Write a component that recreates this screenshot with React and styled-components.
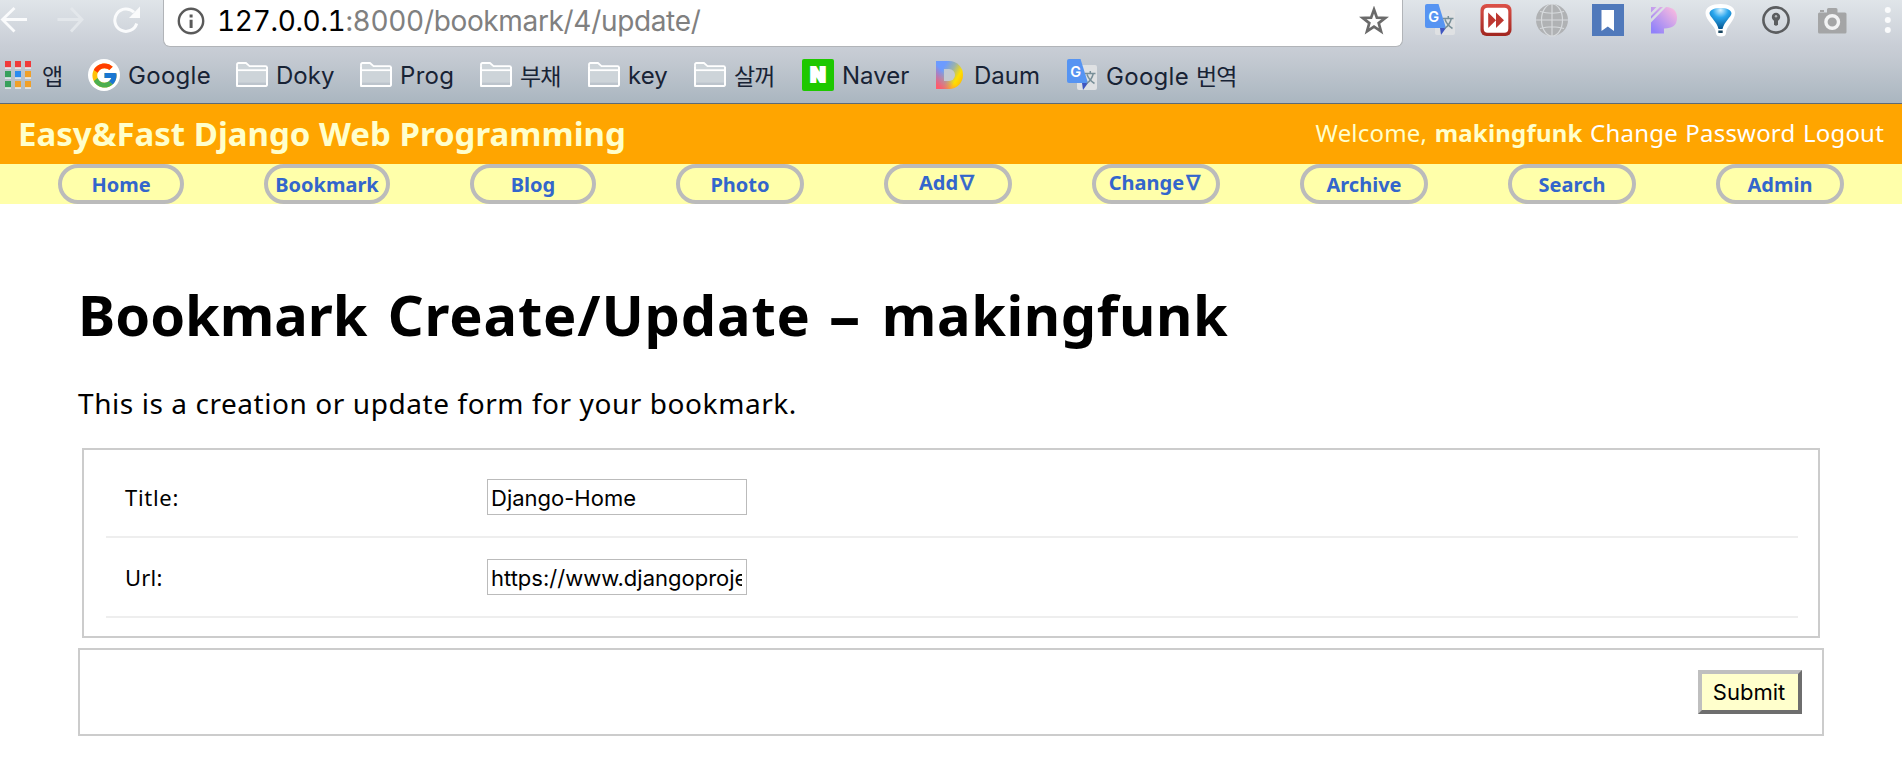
import React from "react";
import styled, { createGlobalStyle } from "styled-components";
import { FcGoogle } from "react-icons/fc";

const GlobalStyle = createGlobalStyle`
  * { box-sizing: border-box; }
  body { margin: 0; background: #fff; overflow: hidden; }
  svg { display: block; flex: none; }
`;

const uiFont = `Inter, "Noto Sans CJK KR", sans-serif`;
const pageFont = `"Lucida Grande", "Noto Sans", "DejaVu Sans", sans-serif`;

/* Browser chrome */

const Chrome = styled.div`
  height: 104px;
  overflow: hidden;
  background: linear-gradient(#e0e5e9 0, #c9ced6 46px, #c3c9d1 60px, #aab6c0 103px);
  border-bottom: 1px solid #5d6a76;
  font-family: ${uiFont};
`;
const Toolbar = styled.div`
  display: flex;
  align-items: flex-start;
  height: 47px;
`;
const NavControls = styled.div`
  display: flex;
  flex: none;
  width: 163px;
  padding-top: 6px;
  gap: 28px;
`;
const AddressBar = styled.div`
  display: flex;
  flex: none;
  align-items: center;
  width: 1240px;
  height: 47px;
  padding: 0 13px 5px;
  background: #fff;
  border: solid #b1b4b8;
  border-width: 0 1px 1px;
  border-radius: 0 0 7px 7px;
`;
const Url = styled.div`
  flex: 1;
  margin-left: 12px;
  font-size: 28px;
  line-height: 42px;
  letter-spacing: -0.34px;
  font-feature-settings: "tnum";
  color: #808080;
`;
const Host = styled.span`
  color: #000;
`;
const Extensions = styled.div`
  display: flex;
  flex: none;
  gap: 24px;
  padding: 4px 0 0 21px;
`;
const BookmarkBar = styled.div`
  display: flex;
  padding: 12px 0 0 5px;
`;
const BookmarkLink = styled.div`
  display: flex;
  align-items: center;
  flex: none;
  width: ${(p) => p.$width}px;
  height: 32px;
  font-size: 24px;
  letter-spacing: ${(p) => p.$spacing || 0}px;
  white-space: nowrap;
  color: #182335;
`;
const BookmarkIcon = styled.span`
  display: flex;
  flex: none;
  width: ${(p) => p.$width || 40}px;
`;
const Korean = styled.span`
  font-family: "Noto Sans CJK KR", sans-serif;
  font-size: 23px;
  font-weight: 400;
  letter-spacing: -0.9px;
`;
const GoogleBadge = styled.span`
  display: flex;
  align-items: center;
  justify-content: center;
  width: 32px;
  height: 32px;
  border-radius: 50%;
  background: #fff;
`;
const NaverBadge = styled.span`
  display: flex;
  align-items: center;
  justify-content: center;
  width: 32px;
  height: 32px;
  border-radius: 2px;
  background: #1ec800;
  color: #fff;
  font: 900 20px/32px Inter, sans-serif;
  -webkit-text-stroke: 2px #fff;
`;
const DaumBadge = styled.span`
  display: flex;
  align-items: center;
  justify-content: center;
  width: 27px;
  height: 28px;
  margin-left: 1px;
  border-radius: 0 14px 14px 0;
  background: linear-gradient(to top right, #ff5b6c 8%, #ff9a1a00 45%),
    linear-gradient(120deg, #6c9bff 25%, #9db3a6 50%, #ffe000 72%, #ffa510);
  &::after {
    content: "";
    width: 11px;
    height: 12px;
    border-radius: 0 6px 6px 0;
    background: #c3cad1;
  }
`;

const BackIcon = () => (
  <svg width="28" height="28" viewBox="0 0 28 28" fill="none" stroke="#fafbfc" strokeWidth="2.8">
    <path d="M14.5 2 2.5 13.5 14.5 25.5M2.5 13.5H27" />
  </svg>
);
const ForwardIcon = () => (
  <svg width="28" height="28" viewBox="0 0 28 28" fill="none" stroke="#e3e7eb" strokeWidth="2.8">
    <path d="M15 2 26 13.5 15 25.5M26 13.5H1.5" />
  </svg>
);
const ReloadIcon = () => (
  <svg width="30" height="28" viewBox="0 0 30 28">
    <path d="M24.7 17.5A11.2 11.2 0 1 1 22 6.3" fill="none" stroke="#fafbfc" strokeWidth="3" />
    <path d="M28 .5V12H17z" fill="#fafbfc" />
  </svg>
);
const InfoIcon = () => (
  <svg width="28" height="28" viewBox="0 0 28 28">
    <circle cx="14" cy="14" r="12.2" fill="none" stroke="#5a5a5a" strokeWidth="2.4" />
    <path d="M12.6 7.6h3v3h-3zM12.6 12.8h3V21h-3z" fill="#5a5a5a" />
  </svg>
);
const StarIcon = () => (
  <svg width="30" height="30" viewBox="0 0 30 30">
    <path
      d="M15 3.5 17.9 11.6 26.3 11.9 19.7 17.1 22 25.4 15 20.6 8 25.4 10.3 17.1 3.7 11.9 12.1 11.6z"
      fill="none" stroke="#6a6a6a" strokeWidth="2.7"
    />
  </svg>
);
const FolderIcon = () => (
  <svg width="32" height="32" viewBox="0 0 32 32" stroke="#fff" strokeWidth="1.8" strokeLinejoin="round">
    <path d="M1 27V5.5Q1 4 2.5 4H10L13.5 7.2H29.5Q31 7.2 31 8.7V25.5Q31 27 29.5 27H2.5Q1 27 1 25.5z" fill="#cdd4d9" />
    <path d="M1 11.2H31" />
    <path d="M2 24.8H30" stroke="#bcc4cc" strokeWidth="2.4" />
    <path d="M1 8V25.5Q1 27 2.5 27H29.5Q31 27 31 25.5V8" fill="none" />
  </svg>
);
const AppsIcon = () => (
  <svg width="26" height="28" viewBox="0 0 26 28">
    {["#f03a3a", "#f03a3a", "#f03a3a", "#37a05c", "#2a8cf0", "#f0a028", "#37a05c", "#f0a028", "#f0a028"].map((c, i) => (
      <g key={i}>
        <rect x={(i % 3) * 10} y={1 + Math.floor(i / 3) * 10} width="6" height="6.8" fill="#e8ecef" />
        <rect x={(i % 3) * 10} y={Math.floor(i / 3) * 10} width="6" height="6.2" fill={c} />
      </g>
    ))}
  </svg>
);
const TranslateIcon = () => (
  <svg width="32" height="32" viewBox="0 0 32 32">
    <rect x="11" y="6" width="20" height="25" rx="2" fill="#dfe1e3" />
    <path d="M16 24h6l-5 7z" fill="#3f56c0" />
    <path d="M1 2Q1 0 3 0H14.5L22 24H3Q1 24 1 22z" fill="#5694f2" />
    <text x="4.2" y="18" fontFamily="Inter" fontSize="14.5" fontWeight="600" fill="#fff">G</text>
    <path d="M19 14.5h10.5M24.3 12v2.5M27.3 14.5Q25.8 21 20.6 24.5M21 15.5Q23 21 28.5 24.5" fill="none" stroke="#788f98" strokeWidth="1.5" />
  </svg>
);
const FastForwardIcon = () => (
  <svg width="32" height="33" viewBox="0 0 32 33">
    <defs>
      <linearGradient id="redFrame" x2="0" y2="1">
        <stop stopColor="#dc5148" />
        <stop offset="1" stopColor="#a12620" />
      </linearGradient>
    </defs>
    <rect x=".5" width="31" height="32" rx="6" fill="url(#redFrame)" />
    <rect x="3.7" y="3.7" width="24.6" height="25" rx="4" fill="#fff" />
    <path d="M8.2 8.5 16 16.2 8.2 24zM16 8.5 24 16.2 16 24z" fill="#bd3730" />
  </svg>
);
const GlobeIcon = () => (
  <svg width="32" height="33" viewBox="0 0 32 33">
    <ellipse cx="16" cy="16" rx="16" ry="16" fill="#b0b2b4" />
    <g fill="none" stroke="#d7dadd" strokeWidth="1.2">
      <path d="M0 16H32M16 0V32M4 7.5Q16 11 28 7.5M4 24.5Q16 21 28 24.5" />
      <ellipse cx="16" cy="16" rx="10.5" ry="16" />
    </g>
  </svg>
);
const SaveIcon = () => (
  <svg width="32" height="32" viewBox="0 0 32 32">
    <path d="M0 0H32V32H0z" fill="#5079bb" />
    <path d="M9.5 6H22V27L15.8 22.5 9.5 27z" fill="#fff" />
  </svg>
);
const PetalIcon = () => (
  <svg width="32" height="32" viewBox="0 0 32 32">
    <defs>
      <linearGradient id="petal" x1="1" y1="0" x2="0" y2="1">
        <stop offset=".1" stopColor="#f6b9e0" />
        <stop offset=".9" stopColor="#9182fa" />
      </linearGradient>
    </defs>
    <path d="M3 29.5V18.5L18 3Q29 3.5 29 14 29 24.5 16 24.5V29.5zM3 14.8V12L12 3H15zM3 8.5V3H8.5z" fill="url(#petal)" />
  </svg>
);
const BalloonIcon = () => (
  <svg width="32" height="34" viewBox="0 0 32 34">
    <defs>
      <radialGradient id="balloon" cx=".5" cy=".1" r=".9">
        <stop stopColor="#d5f1ff" />
        <stop offset=".4" stopColor="#29a6ee" />
        <stop offset="1" stopColor="#06558f" />
      </radialGradient>
    </defs>
    <path d="M16.5 0C25 0 31 3 31 9 31 17 22 22 22 29Q22 32.5 17 32.5 12 32.5 12 29C12 22 1.5 17 1.5 9 1.5 3 8 0 16.5 0z" fill="#fff" />
    <path d="M16.5 4C23 4 27.5 6 27.5 9.5 27 13 20 18 18.5 25H14.5C13 18 6 13 5.5 9.5 5.5 6 10 4 16.5 4z" fill="url(#balloon)" />
    <path d="M14.3 26.5h4.4v2.5h-4.4z" fill="#17445f" />
  </svg>
);
const KeyholeIcon = () => (
  <svg width="32" height="32" viewBox="0 0 32 32">
    <circle cx="16" cy="16" r="12.6" fill="none" stroke="#5b5d5f" strokeWidth="2.6" />
    <circle cx="16" cy="13" r="4.2" fill="#5b5d5f" />
    <path d="M14 15h4v5.5q-2 2.5-4 0z" fill="#5b5d5f" />
    <circle cx="16" cy="12.2" r="1.2" fill="#b3b6b9" />
  </svg>
);
const CameraIcon = () => (
  <svg width="32" height="32" viewBox="0 0 32 32" fill="#a4a5a6">
    <path d="M2 10Q2 8.5 3.5 8.5H11V5.5Q11 4 12.5 4H20Q21.5 4 21.5 5.5V8.5H29Q30.5 8.5 30.5 10V28Q30.5 29.5 29 29.5H3.5Q2 29.5 2 28zM4 6h4v2H4z" />
    <circle cx="16.2" cy="18" r="6.3" fill="none" stroke="#f2f3f4" strokeWidth="3.4" />
  </svg>
);
const MenuIcon = () => (
  <svg width="30" height="34" viewBox="0 0 30 34" fill="#fafbfc">
    <circle cx="15.8" cy="6" r="3" />
    <circle cx="15.8" cy="16" r="3" />
    <circle cx="15.8" cy="26" r="3" />
  </svg>
);

/* Site */

const Header = styled.header`
  display: flex;
  align-items: flex-start;
  justify-content: space-between;
  height: 60px;
  padding: 0 18px;
  background: #ffa500;
  color: #ffffcc;
  font-family: ${pageFont};
`;
const SiteTitle = styled.div`
  font-size: 33px;
  font-weight: 700;
  line-height: 60px;
`;
const UserTools = styled.div`
  font-size: 24px;
  line-height: 58px;
  letter-spacing: 0.2px;
  word-spacing: 1px;
`;
const ToolLink = styled.a`
  color: #fff;
`;
const NavBar = styled.nav`
  display: flex;
  gap: 80px;
  height: 40px;
  padding-left: 58px;
  background: #ffffaa;
`;
const NavPill = styled.a`
  display: flex;
  align-items: center;
  justify-content: center;
  flex: none;
  width: ${(p) => p.$width}px;
  height: 40px;
  padding: ${(p) => (p.$menu ? "0 3px 2px 0" : "2px 0 0")};
  border: 4px solid #bbb;
  border-radius: 20px;
  color: #3366cc;
  font: 700 20px/30px ${pageFont};
`;
const MenuMark = styled.span`
  margin-left: 2px;
  font: 400 21px/30px "DejaVu Sans", sans-serif;
  -webkit-text-stroke: 0.6px #3366cc;
`;
const Main = styled.main`
  padding: 78px 78px 0;
  color: #000;
  font-family: ${pageFont};
`;
const Heading = styled.h1`
  margin: 0;
  font-size: 56px;
  line-height: 64px;
  white-space: nowrap;
  letter-spacing: 0.6px;
  word-spacing: 5px;
`;
const Word = styled.span`
  letter-spacing: ${(p) => p.$spacing}px;
`;
const Dash = styled.span`
  display: inline-block;
  margin: 0 7px 0 5px;
  transform: scaleX(1.8);
`;
const Intro = styled.p`
  margin: 40px 0 28px;
  font-size: 28px;
  line-height: 34px;
  letter-spacing: 0.57px;
`;
const Fields = styled.div`
  margin: 0 4px;
  padding: 8px 20px 18px 22px;
  border: 2px solid #ccc;
`;
const FieldRow = styled.label`
  display: grid;
  grid-template-columns: 362px 260px;
  align-items: center;
  height: 80px;
  padding-left: 19px;
  border-bottom: 2px solid #eee;
  font-size: 22px;
  letter-spacing: ${(p) => p.$spacing}px;
`;
const TextInput = styled.input`
  width: 260px;
  height: 36px;
  padding: 2px 4px 0 3px;
  border: 1px solid #bbb;
  border-radius: 0;
  color: #000;
  font: 22px Inter, sans-serif;
`;
const SubmitRow = styled.div`
  display: flex;
  align-items: center;
  justify-content: flex-end;
  height: 88px;
  margin-top: 10px;
  padding-right: 20px;
  border: 2px solid #ccc;
`;
const SubmitButton = styled.button`
  width: 104px;
  height: 44px;
  padding: 0 2px 0 0;
  border: 4px solid;
  border-color: #bfbfbf #6e6e6e #6e6e6e #bfbfbf;
  background: #ffffcc;
  color: #000;
  font: 22px/36px Inter, sans-serif;
`;

const bookmarks = [
  { width: 83, slot: 37, icon: <AppsIcon />, korean: "앱" },
  { width: 148, icon: <GoogleBadge><FcGoogle size={29} /></GoogleBadge>, text: "Google", spacing: 0.3 },
  { width: 124, icon: <FolderIcon />, text: "Doky" },
  { width: 120, icon: <FolderIcon />, text: "Prog", spacing: 0.3 },
  { width: 108, icon: <FolderIcon />, korean: "부채" },
  { width: 106, icon: <FolderIcon />, text: "key" },
  { width: 108, icon: <FolderIcon />, korean: "살꺼" },
  { width: 133, icon: <NaverBadge>N</NaverBadge>, text: "Naver" },
  { width: 131, slot: 39, icon: <DaumBadge />, text: "Daum" },
  { width: 180, icon: <TranslateIcon />, text: "Google ", korean: "번역", spacing: 0.3 },
];

const pills = [
  ["Home", 126], ["Bookmark", 126], ["Blog", 126], ["Photo", 128],
  ["Add", 128, true], ["Change", 128, true],
  ["Archive", 128], ["Search", 128], ["Admin", 128],
];

export default function App() {
  return (
    <>
      <GlobalStyle />
      <Chrome>
        <Toolbar>
          <NavControls>
            <BackIcon />
            <ForwardIcon />
            <ReloadIcon />
          </NavControls>
          <AddressBar>
            <InfoIcon />
            <Url><Host>127.0.0.1</Host>:8000/bookmark/4/update/</Url>
            <StarIcon />
          </AddressBar>
          <Extensions>
            <TranslateIcon />
            <FastForwardIcon />
            <GlobeIcon />
            <SaveIcon />
            <PetalIcon />
            <BalloonIcon />
            <KeyholeIcon />
            <CameraIcon />
            <MenuIcon />
          </Extensions>
        </Toolbar>
        <BookmarkBar>
          {bookmarks.map((b, i) => (
            <BookmarkLink key={i} $width={b.width} $spacing={b.spacing}>
              <BookmarkIcon $width={b.slot}>{b.icon}</BookmarkIcon>
              <span>{b.text}{b.korean && <Korean>{b.korean}</Korean>}</span>
            </BookmarkLink>
          ))}
        </BookmarkBar>
      </Chrome>
      <Header>
        <SiteTitle>Easy&amp;Fast Django Web Programming</SiteTitle>
        <UserTools>
          Welcome, <b>makingfunk</b> <ToolLink>Change Password</ToolLink> <ToolLink>Logout</ToolLink>
        </UserTools>
      </Header>
      <NavBar>
        {pills.map(([label, width, menu]) => (
          <NavPill key={label} $width={width} $menu={menu}>
            {label}{menu && <MenuMark>∇</MenuMark>}
          </NavPill>
        ))}
      </NavBar>
      <Main>
        <Heading>
          <Word $spacing={-0.05}>Bookmark</Word> <Word $spacing={0.85}>Create/Update</Word> <Dash>-</Dash> makingfunk
        </Heading>
        <Intro>This is a creation or update form for your bookmark.</Intro>
        <Fields>
          <FieldRow $spacing={0.7}>Title:<TextInput defaultValue="Django-Home" /></FieldRow>
          <FieldRow $spacing={0.2}>Url:<TextInput defaultValue="https://www.djangoproject.com/" /></FieldRow>
        </Fields>
        <SubmitRow><SubmitButton>Submit</SubmitButton></SubmitRow>
      </Main>
    </>
  );
}
